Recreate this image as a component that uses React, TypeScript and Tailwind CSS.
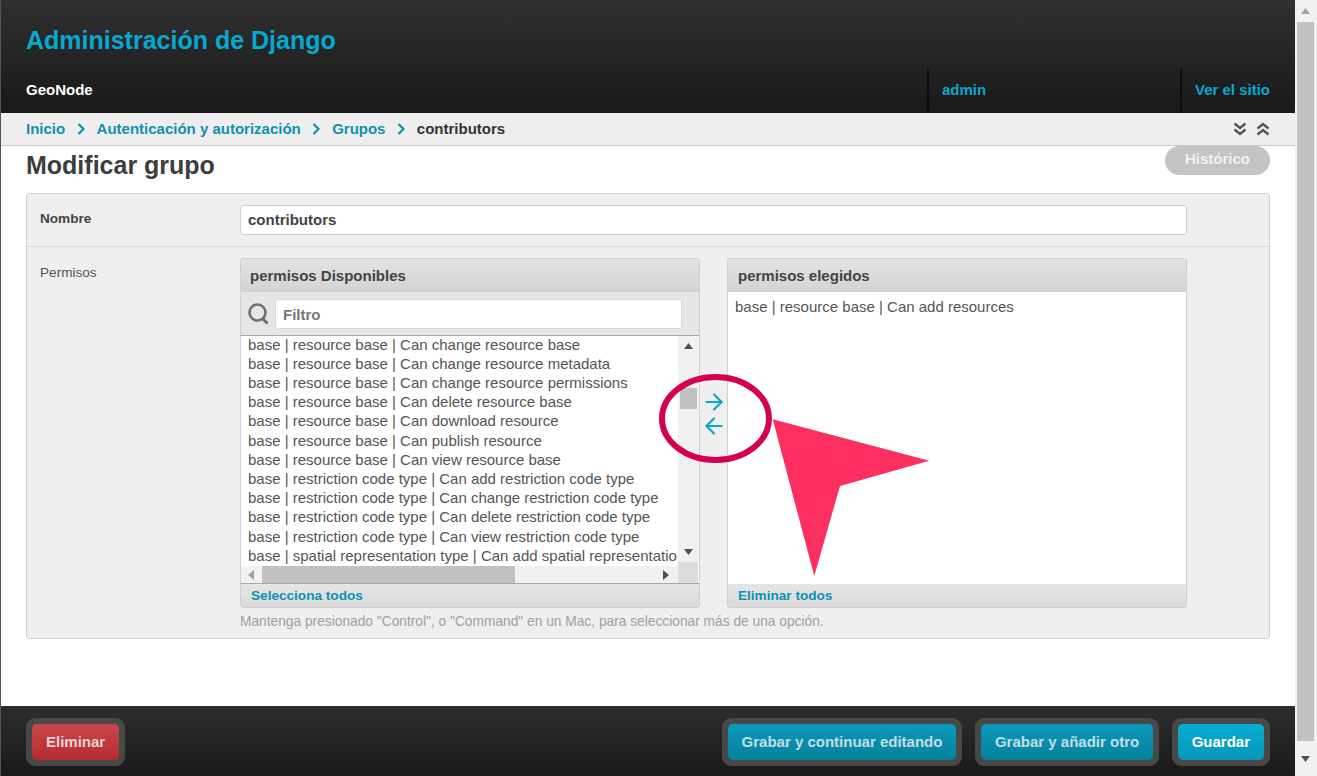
import { ArrowLeft, ArrowRight } from "lucide-react";

const font = { fontFamily: '"Liberation Sans", Arial, sans-serif' };

const available = [
  "base | resource base | Can change resource base",
  "base | resource base | Can change resource metadata",
  "base | resource base | Can change resource permissions",
  "base | resource base | Can delete resource base",
  "base | resource base | Can download resource",
  "base | resource base | Can publish resource",
  "base | resource base | Can view resource base",
  "base | restriction code type | Can add restriction code type",
  "base | restriction code type | Can change restriction code type",
  "base | restriction code type | Can delete restriction code type",
  "base | restriction code type | Can view restriction code type",
  "base | spatial representation type | Can add spatial representation type",
];

function Tri({ dir, className }: { dir: "up" | "down" | "left" | "right"; className?: string }) {
  const points = {
    up: "0,8 4.5,2 9,8",
    down: "0,2 4.5,8 9,2",
    left: "7,0 1,5 7,10",
    right: "1,0 7,5 1,10",
  }[dir];
  return (
    <svg width="9" height="10" viewBox="0 0 9 10" className={className}>
      <polygon points={points} fill="currentColor" />
    </svg>
  );
}

function Crumb() {
  return (
    <svg width="8" height="12" viewBox="0 0 8 12" className="mx-[11.7px]">
      <polyline points="1.5,1 6.5,6 1.5,11" fill="none" stroke="currentColor" strokeWidth="2.2" />
    </svg>
  );
}

function Double({ up }: { up?: boolean }) {
  return (
    <svg width="14" height="14" viewBox="0 0 14 14" className={up ? "rotate-180" : ""}>
      <polyline points="1.5,1.5 7,6 12.5,1.5" fill="none" stroke="currentColor" strokeWidth="2.4" />
      <polyline points="1.5,7.5 7,12 12.5,7.5" fill="none" stroke="currentColor" strokeWidth="2.4" />
    </svg>
  );
}

function ActionButton({ label, tone, tight }: { label: string; tone: "red" | "dim" | "blue"; tight?: boolean }) {
  const toneClass =
    tone === "red"
      ? "bg-gradient-to-b from-[#c8474c] to-[#b52a30] text-[#e8d4d4]"
      : tone === "dim"
        ? "bg-gradient-to-b from-[#0a9abb] to-[#07809c] text-[#c3dde4]"
        : "bg-gradient-to-b from-[#06aed3] to-[#0796b8] text-white";
  return (
    <div className="rounded-[9px] bg-[#484848] p-[6px]">
      <div className={`flex h-[36px] items-center rounded-[5px] text-[15px] font-bold ${tight ? "px-[13.5px]" : "px-[14px]"} ${toneClass}`}>
        {label}
      </div>
    </div>
  );
}

function ColumnHead({ label, wide }: { label: string; wide?: boolean }) {
  return (
    <div className={`flex h-[33px] shrink-0 items-center border-b border-[#d0d0d0] bg-gradient-to-b from-[#e3e3e3] to-[#d4d4d4] pt-[2px] text-[15px] font-bold text-[#444] ${wide ? "pl-[10px]" : "pl-[9px]"}`}>
      {label}
    </div>
  );
}

function ColumnFoot({ label }: { label: string }) {
  return (
    <div className="flex h-[23px] shrink-0 items-center bg-gradient-to-b from-[#e6e6e6] to-[#dadada] px-[10px] pt-[1px] text-[13.6px] font-bold text-[#0a93b5]">
      {label}
    </div>
  );
}

export default function App() {
  return (
    <div style={font} className="relative flex h-[776px] w-[1317px] overflow-hidden bg-white">
      <div className="flex min-w-0 flex-1 flex-col border-l border-[#555]">
        <header className="h-[113px] shrink-0 bg-gradient-to-b from-[#303030] to-[#191919]">
          <div className="flex h-[69px] items-center pl-[25px] pt-[12px]">
            <h1 className="text-[25px] font-bold text-[#06a9d0]">Administración de Django</h1>
          </div>
          <div className="flex h-[44px] items-center text-[15px] font-bold">
            <div className="flex h-full flex-1 items-center pb-[2px] pl-[25px] text-white">GeoNode</div>
            <div className="flex h-full w-[253px] items-center border-l-2 border-[#0d0d0d] pb-[2px] pl-[13px] text-[#06a9d0]">admin</div>
            <div className="flex h-full w-[115px] items-center border-l-2 border-[#0d0d0d] pb-[2px] pl-[13px] text-[#06a9d0]">Ver el sitio</div>
          </div>
        </header>

        <nav className="flex h-[33px] shrink-0 items-center justify-between border-b border-[#c8c8c8] bg-[#eeeeee] pl-[25px] pr-[25px] text-[15px] font-bold">
          <div className="flex items-center text-[#1090ae]">
            <span>Inicio</span>
            <Crumb />
            <span>Autenticación y autorización</span>
            <Crumb />
            <span>Grupos</span>
            <Crumb />
            <span className="text-[#333]">contributors</span>
          </div>
          <div className="flex items-center gap-[9px] text-[#555]">
            <Double />
            <Double up />
          </div>
        </nav>

        <main className="flex-1 px-[25px]">
          <div className="relative flex h-[47px] items-start">
            <h2 className="pt-[1px] text-[25px] font-bold text-[#3d3d3d]">Modificar grupo</h2>
            <div className="absolute right-0 top-0 flex h-[29px] w-[105px] items-center justify-center rounded-[15px] bg-[#c4c4c4] pb-[3px] text-[15px] font-bold text-[#f1f1f1]">
              Histórico
            </div>
          </div>

          <div className="h-[446px] rounded-[3px] border border-[#d0d0d0] bg-[#efefef]">
            <div className="flex h-[53px] border-b border-[#dcdcdc] pl-[13px] pt-[11px]">
              <label className="w-[200px] pt-[4px] text-[13.6px] font-bold text-[#444]">Nombre</label>
              <div className="flex h-[30px] w-[947px] items-center rounded-[3px] border border-[#cfcfcf] bg-white px-[7px] text-[15px] font-bold text-[#444]">
                contributors
              </div>
            </div>

            <div className="flex pl-[13px] pt-[11px]">
              <label className="w-[200px] pt-[5px] text-[13.6px] text-[#555]">Permisos</label>
              <div>
                <div className="flex h-[350px]">
                  <div className="flex w-[460px] flex-col overflow-hidden rounded-[3px] border border-[#d0d0d0]">
                    <ColumnHead label="permisos Disponibles" />
                    <div className="flex h-[43px] shrink-0 items-center bg-[#e6e6e6] pl-[7px] pr-[17px]">
                      <svg width="21" height="22" viewBox="0 0 21 22" className="shrink-0 text-[#707070]">
                        <circle cx="9.5" cy="9.5" r="8" fill="none" stroke="currentColor" strokeWidth="2.6" />
                        <line x1="14.5" y1="15.5" x2="19.5" y2="20.5" stroke="currentColor" strokeWidth="3" />
                      </svg>
                      <div className="ml-[6px] flex h-[30px] flex-1 items-center rounded-[3px] border border-[#dadada] bg-white px-[7px] pt-[3px] text-[15px] font-bold text-[#777]">
                        Filtro
                      </div>
                    </div>
                    <div className="-mx-px flex h-[249px] shrink-0 border border-[#a8a8a8] bg-white">
                      <div className="flex w-[437px] shrink-0 flex-col">
                        <div className="h-[230px] shrink-0 overflow-hidden pl-[7px] text-[15px] leading-[19.2px] text-[#555]">
                          <div className="-mt-[1.4px]">
                            {available.map((row) => (
                              <div key={row} className="whitespace-nowrap">{row}</div>
                            ))}
                          </div>
                        </div>
                        <div className="flex h-[17px] shrink-0 items-center bg-[#f1f1f1]">
                          <div className="flex w-[21px] justify-center text-[#a3a3a3]"><Tri dir="left" /></div>
                          <div className="h-[17px] w-[253px] bg-[#c1c1c1]" />
                          <div className="flex flex-1 justify-end pr-[7px] text-[#505050]"><Tri dir="right" /></div>
                        </div>
                      </div>
                      <div className="flex w-[21px] shrink-0 flex-col">
                        <div className="flex h-[226px] shrink-0 flex-col bg-[#f1f1f1] pb-[5px] pt-[5px] text-[#505050]">
                          <Tri dir="up" className="ml-[6px]" />
                          <div className="ml-[2px] mt-[37px] h-[21px] w-[17px] bg-[#c1c1c1]" />
                          <Tri dir="down" className="ml-[6px] mt-auto" />
                        </div>
                        <div className="h-[21px] w-[20px] bg-[#dcdcdc]" />
                      </div>
                    </div>
                    <ColumnFoot label="Selecciona todos" />
                  </div>

                  <div className="flex w-[27px] flex-col items-center pt-[131px] text-[#0ba8c9]">
                    <ArrowRight size={26} strokeWidth={2} />
                    <ArrowLeft size={26} strokeWidth={2} className="-mt-[2px]" />
                  </div>

                  <div className="flex w-[460px] flex-col overflow-hidden rounded-[3px] border border-[#d0d0d0]">
                    <ColumnHead label="permisos elegidos" wide />
                    <div className="flex-1 bg-white px-[7px] pt-[5px] text-[15px] leading-[19.2px] text-[#555]">
                      base | resource base | Can add resources
                    </div>
                    <ColumnFoot label="Eliminar todos" />
                  </div>
                </div>
                <p className="pt-[4px] text-[13.75px] text-[#a0a0a0]">
                  Mantenga presionado "Control", o "Command" en un Mac, para seleccionar más de una opción.
                </p>
              </div>
            </div>
          </div>
        </main>

        <footer className="flex h-[70px] shrink-0 items-start justify-between bg-gradient-to-b from-[#2d2d2d] to-[#1a1a1a] pl-[25px] pr-[25px] pt-[12px]">
          <ActionButton label="Eliminar" tone="red" />
          <div className="flex gap-[13px]">
            <ActionButton label="Grabar y continuar editando" tone="dim" />
            <ActionButton label="Grabar y añadir otro" tone="dim" tight />
            <ActionButton label="Guardar" tone="blue" />
          </div>
        </footer>
      </div>

      <div className="flex w-[22px] shrink-0 flex-col bg-[#f1f1f1] text-[#a3a3a3]">
        <div className="flex h-[22px] shrink-0 items-center pl-[6px]"><Tri dir="up" /></div>
        <div className="ml-[2px] h-[719px] w-[17px] bg-[#c1c1c1]" />
        <div className="flex flex-1 items-center pl-[6px] text-[#505050]"><Tri dir="down" /></div>
      </div>

      {/* annotation drawn over the screenshot */}
      <svg width="1317" height="776" className="pointer-events-none absolute left-0 top-0">
        <ellipse cx="715.5" cy="418.5" rx="53.5" ry="41.5" fill="none" stroke="#d4004f" strokeWidth="6" />
        <polygon points="772.7,419.3 929.3,460.7 840,486 814.3,576" fill="#fd2f60" />
      </svg>
    </div>
  );
}
